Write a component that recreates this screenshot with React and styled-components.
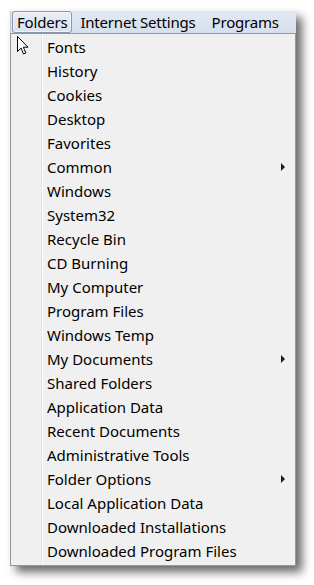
import React from "react";
import styled, { createGlobalStyle } from "styled-components";

const GlobalStyle = createGlobalStyle`
  html, body {
    margin: 0;
    padding: 0;
    background: #ffffff;
  }
  body {
    font-family: "Noto Sans", "Open Sans", sans-serif;
  }
`;

const Page = styled.div`
  width: 314px;
  height: 585px;
  padding: 11px 0 0 10px;
  box-sizing: border-box;
`;

const Window = styled.div`
  width: 286px;
  display: flex;
  flex-direction: column;
  box-shadow: 6px 6px 9px rgba(0, 0, 0, 0.6);
`;

const MenuBar = styled.div`
  height: 22px;
  display: flex;
  align-items: stretch;
  background: linear-gradient(#e3e9f3, #d6dfed);
  border-left: 1px solid #c6ccd6;
  box-sizing: border-box;
`;

const MenuItem = styled.div`
  display: flex;
  align-items: center;
  padding: 0 ${(p) => (p.$active ? "4px" : "7px")};
  margin-left: ${(p) => (p.$active ? "1px" : "0")};
  font-size: 15px;
  letter-spacing: -0.2px;
  color: #000;
  border: 1px solid ${(p) => (p.$active ? "#8896ab" : "transparent")};
  border-radius: 3px;
  background: ${(p) => (p.$active ? "linear-gradient(#e9eef6, #d9e1ee)" : "transparent")};
  box-shadow: ${(p) => (p.$active ? "inset 0 0 0 1px rgba(255,255,255,0.6)" : "none")};
`;

const Dropdown = styled.div`
  position: relative;
  background: #f0f0f0;
  border: 1px solid #979797;
  padding: 1px 0 0 0;
  height: 533px;
  box-sizing: border-box;
  display: flex;
  flex-direction: column;
  &::before {
    content: "";
    position: absolute;
    top: 0;
    bottom: 0;
    left: 30px;
    width: 1px;
    background: #e2e3e3;
    box-shadow: 1px 0 0 #ffffff;
  }
`;

const Item = styled.div`
  height: 24px;
  display: flex;
  align-items: center;
  justify-content: space-between;
  padding: 0 10px 0 36px;
  font-size: 15px;
  color: #000;
  white-space: nowrap;
`;

const Arrow = styled.span`
  width: 0;
  height: 0;
  border-top: 4px solid transparent;
  border-bottom: 4px solid transparent;
  border-left: 4px solid #1c1c1c;
`;

const Cursor = styled.svg`
  position: absolute;
  left: 6px;
  top: 2px;
`;

const items = [
  ["Fonts"],
  ["History"],
  ["Cookies"],
  ["Desktop"],
  ["Favorites"],
  ["Common", true],
  ["Windows"],
  ["System32"],
  ["Recycle Bin"],
  ["CD Burning"],
  ["My Computer"],
  ["Program Files"],
  ["Windows Temp"],
  ["My Documents", true],
  ["Shared Folders"],
  ["Application Data"],
  ["Recent Documents"],
  ["Administrative Tools"],
  ["Folder Options", true],
  ["Local Application Data"],
  ["Downloaded Installations"],
  ["Downloaded Program Files"],
];

export default function App() {
  return (
    <Page>
      <GlobalStyle />
      <Window>
        <MenuBar>
          <MenuItem $active>Folders</MenuItem>
          <MenuItem>Internet Settings</MenuItem>
          <MenuItem>Programs</MenuItem>
        </MenuBar>
        <Dropdown>
          <Cursor width="13" height="20" viewBox="0 0 13 20">
            <path
              d="M0.5 0.5 L0.5 15.5 L4 12 L6.5 18 L8.8 17 L6.3 11.2 L11 11.2 Z"
              fill="#ffffff"
              stroke="#000000"
              strokeWidth="1"
              strokeLinejoin="miter"
            />
          </Cursor>
          {items.map(([label, sub]) => (
            <Item key={label}>
              <span>{label}</span>
              {sub && <Arrow />}
            </Item>
          ))}
        </Dropdown>
      </Window>
    </Page>
  );
}
